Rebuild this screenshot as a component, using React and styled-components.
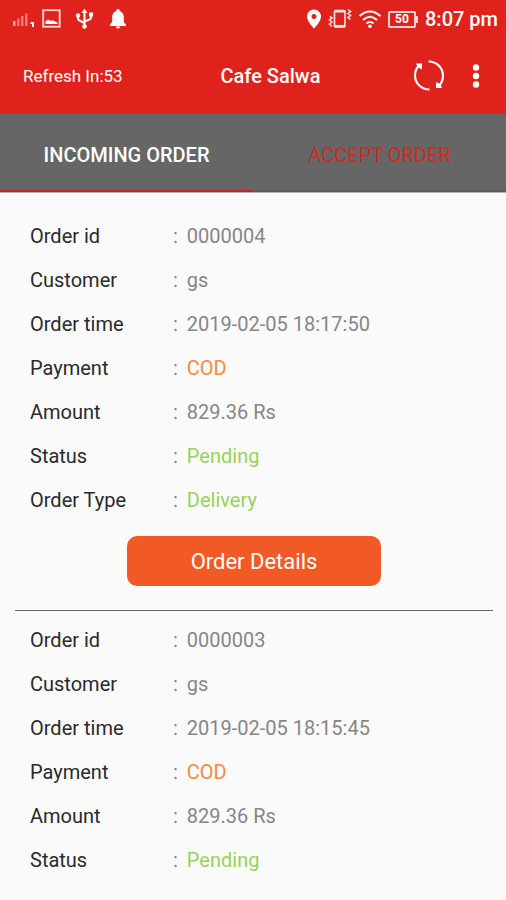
import {useState} from 'react';
import styled, {createGlobalStyle} from 'styled-components';

const orders = [
    {
        id: '0000004',
        showDetails: true,
        fields: [
            {label: 'Order id', value: '0000004'},
            {label: 'Customer', value: 'gs'},
            {label: 'Order time', value: '2019-02-05 18:17:50'},
            {label: 'Payment', value: 'COD', tone: 'orange'},
            {label: 'Amount', value: '829.36 Rs'},
            {label: 'Status', value: 'Pending', tone: 'green'},
            {label: 'Order Type', value: 'Delivery', tone: 'green'},
        ],
    },
    {
        id: '0000003',
        fields: [
            {label: 'Order id', value: '0000003'},
            {label: 'Customer', value: 'gs'},
            {label: 'Order time', value: '2019-02-05 18:15:45'},
            {label: 'Payment', value: 'COD', tone: 'orange'},
            {label: 'Amount', value: '829.36 Rs'},
            {label: 'Status', value: 'Pending', tone: 'green'},
        ],
    },
];

const tones = {
    grey: '#868686',
    orange: '#f98a3c',
    green: '#98d25a',
};

const SignalIcon = () => (
    <svg width="22" height="18" viewBox="0 0 22 18" fill="#fff">
        <rect x="1" y="11" width="2.500" height="5" opacity="0.55" />
        <rect x="5" y="8.500" width="2.500" height="7.500" opacity="0.4" />
        <rect x="9" y="6" width="2.500" height="10" opacity="0.4" />
        <rect x="13" y="3.500" width="2.500" height="12.500" opacity="0.4" />
        <path d="M18.500 12H22V17H20V14H18.500Z" />
    </svg>
);

const ImageIcon = () => (
    <svg width="19" height="20" viewBox="0 0 19 20">
        <rect x="1.200" y="1.200" width="16.500" height="16.500" fill="none" stroke="#fbd5d2" strokeWidth="1.900" />
        <path d="M3.500 15V12L6.500 10.500L8.500 12L10.500 11.300L15.500 13.500V15Z" fill="#fff" />
    </svg>
);

const UsbIcon = () => (
    <svg width="20" height="22" viewBox="0 0 20 22" fill="none" stroke="#fff" strokeWidth="2">
        <path d="M9.500 3V18M3 8.500V10.500Q3 12 4.500 12.500L9.500 15M16 7V9.500Q16 11 14.500 11.500L9.500 13.500" />
        <path d="M6.500 5L9.500 0.500L12.500 5Z" fill="#fff" stroke="none" />
        <circle cx="9.500" cy="18.500" r="2.300" fill="#fff" stroke="none" />
        <circle cx="3" cy="7.500" r="2.200" fill="#fff" stroke="none" />
        <rect x="14" y="4.500" width="4" height="4" fill="#fff" stroke="none" />
    </svg>
);

const BellIcon = () => (
    <svg width="18" height="22" viewBox="0 0 18 22" fill="#fff">
        <path d="M9 1C10.200 1 10.800 1.800 10.800 3C13.500 4 14.800 6.300 14.800 9V14L17 16.500V18H1V16.500L3.200 14V9C3.200 6.300 4.500 4 7.200 3C7.200 1.800 7.800 1 9 1Z" />
        <path d="M6.800 18.500H11.200A2.200 2 0 0 1 6.800 18.500Z" />
    </svg>
);

const PinIcon = () => (
    <svg width="16" height="20" viewBox="0 0 16 20" fill="#fff">
        <path fillRule="evenodd" d="M8 0.500A7 7 0 0 0 1 7.500C1 12.500 8 19.500 8 19.500S15 12.500 15 7.500A7 7 0 0 0 8 0.500ZM8 5A2.500 2.500 0 1 1 8 10A2.500 2.500 0 0 1 8 5Z" />
    </svg>
);

const VibrateIcon = () => (
    <svg width="24" height="22" viewBox="0 0 24 22" fill="none" stroke="#fde3e1" strokeWidth="1.600">
        <rect x="6.500" y="2.500" width="10.500" height="16.500" rx="1" />
        <path d="M6.500 3.200H17M6.500 18.300H17" strokeWidth="2.400" />
        <path d="M2 8.500L4 10L1.500 12L4 14L1.500 16L4 18.500M20 1.500L22.500 3.500L20 5.500L22.500 7.500L20 9.500L22.500 11.500" />
    </svg>
);

const WifiIcon = () => (
    <svg width="24" height="20" viewBox="0 0 24 20" fill="none" stroke="#fff" strokeWidth="2">
        <path d="M1.500 7Q12 -2 22.500 7M5 11Q12 4.500 19 11M8.500 14.500Q12 11.500 15.500 14.500" />
        <circle cx="12" cy="17.200" r="1.800" fill="#fff" stroke="none" />
    </svg>
);

const RefreshIcon = () => (
    <svg width="32" height="32" viewBox="0 0 32 32" fill="none" stroke="#fff" strokeWidth="2.200">
        <path d="M15.500 1.500C24 1.500 30 8 30 16C30 19.500 28.500 23 26 25.500M16.500 29.500C8 29.500 2 23 2 15.500C2 11.500 3.500 8 6 5.500" />
        <path d="M3 3.500H9V9.500L7 8.500L4.500 7ZM29 28H23V22L25 23L27.500 24.500Z" fill="#fff" stroke="none" />
    </svg>
);

const MoreIcon = () => (
    <svg width="8" height="26" viewBox="0 0 8 26" fill="#fff">
        <circle cx="4" cy="4.500" r="3.200" />
        <circle cx="4" cy="13" r="3.200" />
        <circle cx="4" cy="21.500" r="3.200" />
    </svg>
);

const Order = ({order}) => (
    <OrderCard>
        <FieldList>
            {order.fields.map(({label, value, tone = 'grey'}) => (
                <Field key={label}>
                    <FieldLabel>{label}</FieldLabel>
                    <FieldValue $tone={tone}>{value}</FieldValue>
                </Field>
            ))}
        </FieldList>
        {order.showDetails && <DetailsButton type="button">Order Details</DetailsButton>}
    </OrderCard>
);

const App = () => {
    const [tab, setTab] = useState('incoming');

    return (
        <Screen>
            <GlobalStyle />
            <StatusBar>
                <StatusGroup $gap={8}>
                    <SignalIcon />
                    <ImageIcon />
                    <Spaced><UsbIcon /></Spaced>
                    <Spaced><BellIcon /></Spaced>
                </StatusGroup>
                <StatusGroup $gap={6}>
                    <PinIcon />
                    <VibrateIcon />
                    <WifiIcon />
                    <Battery>50</Battery>
                    <Clock>8:07 pm</Clock>
                </StatusGroup>
            </StatusBar>
            <AppBar>
                <Countdown>Refresh In:53</Countdown>
                <Title>Cafe Salwa</Title>
                <Actions>
                    <IconButton type="button" aria-label="Refresh"><RefreshIcon /></IconButton>
                    <IconButton type="button" aria-label="More options"><MoreIcon /></IconButton>
                </Actions>
            </AppBar>
            <Tabs role="tablist">
                <Tab type="button" role="tab" aria-selected={tab === 'incoming'} $active={tab === 'incoming'} onClick={() => setTab('incoming')}>
                    INCOMING ORDER
                </Tab>
                <Tab type="button" role="tab" aria-selected={tab === 'accept'} $active={tab === 'accept'} onClick={() => setTab('accept')}>
                    ACCEPT ORDER
                </Tab>
            </Tabs>
            <OrderList>
                {orders.map(order => <Order key={order.id} order={order} />)}
            </OrderList>
        </Screen>
    );
};

const GlobalStyle = createGlobalStyle`
    * {
        box-sizing: border-box;
    }

    body {
        margin: 0;
        background: #fafafa;
        font-family: Roboto, "Liberation Sans", sans-serif;
    }

    svg {
        display: block;
        flex-shrink: 0;
    }
`;

const Screen = styled.div`
    min-height: 100vh;
    background: #fafafa;
`;

const StatusBar = styled.div`
    display: flex;
    align-items: center;
    justify-content: space-between;
    height: 38px;
    padding: 0 8px 0 12px;
    background: #df231c;
    color: #fff;
`;

const StatusGroup = styled.div`
    display: flex;
    align-items: center;
    gap: ${props => props.$gap}px;
`;

const Spaced = styled.span`
    margin-left: 6px;
`;

const Battery = styled.span`
    position: relative;
    width: 28px;
    height: 17px;
    border: 2px solid #fbd5d2;
    border-radius: 2px;
    font-size: 12px;
    font-weight: 700;
    line-height: 13px;
    text-align: center;

    &::after {
        content: "";
        position: absolute;
        top: 3px;
        right: -4px;
        width: 2px;
        height: 7px;
        background: #fbd5d2;
    }
`;

const Clock = styled.span`
    margin-left: 3px;
    font-size: 20px;
    font-weight: 500;
    line-height: 24px;
`;

const AppBar = styled.header`
    display: grid;
    grid-template-columns: 1fr auto 1fr;
    align-items: center;
    height: 76px;
    padding: 0 26px 0 23px;
    background: #df231c;
    color: #fff;
`;

const Countdown = styled.span`
    font-size: 17px;
    line-height: 24px;
`;

const Title = styled.h1`
    margin: 0 0 0 38px;
    font-size: 20px;
    font-weight: 500;
    line-height: 24px;
`;

const Actions = styled.div`
    display: flex;
    align-items: center;
    justify-content: flex-end;
    gap: 27px;
`;

const IconButton = styled.button`
    padding: 0;
    border: 0;
    background: none;
    color: inherit;
    cursor: pointer;
`;

const Tabs = styled.div`
    display: flex;
    height: 79px;
    background: #666;
    border-bottom: 1px solid #b0b0b0;
`;

const Tab = styled.button`
    flex: 1;
    padding: 6px 0 0;
    border: 0;
    border-bottom: 2px solid ${props => (props.$active ? '#c9211c' : '#5c5c5c')};
    background: none;
    color: ${props => (props.$active ? '#fff' : '#cf2a24')};
    font-family: inherit;
    font-size: 20px;
    font-weight: ${props => (props.$active ? 500 : 400)};
    line-height: 24px;
    cursor: pointer;
`;

const OrderList = styled.main`
    padding: 14px 13px 0 15px;
`;

const OrderCard = styled.article`
    padding: 17px 15px 24px;

    & + & {
        border-top: 1px solid #666;
    }
`;

const FieldList = styled.dl`
    display: grid;
    gap: 20px;
    margin: 0;
    font-size: 20px;
    line-height: 24px;
`;

const Field = styled.div`
    display: grid;
    grid-template-columns: 143px 1fr;
`;

const FieldLabel = styled.dt`
    color: #2a2a2a;
`;

const FieldValue = styled.dd`
    display: flex;
    gap: 9px;
    margin: 0;
    color: ${props => tones[props.$tone]};

    &::before {
        content: ":";
        color: ${tones.grey};
    }
`;

const DetailsButton = styled.button`
    display: block;
    width: 254px;
    max-width: 100%;
    height: 50px;
    margin: 24px auto 0;
    padding: 2px 0 0;
    border: 0;
    border-radius: 10px;
    background: #f15a25;
    color: #fff;
    font-family: inherit;
    font-size: 22px;
    line-height: 24px;
    cursor: pointer;
`;

export default App;
